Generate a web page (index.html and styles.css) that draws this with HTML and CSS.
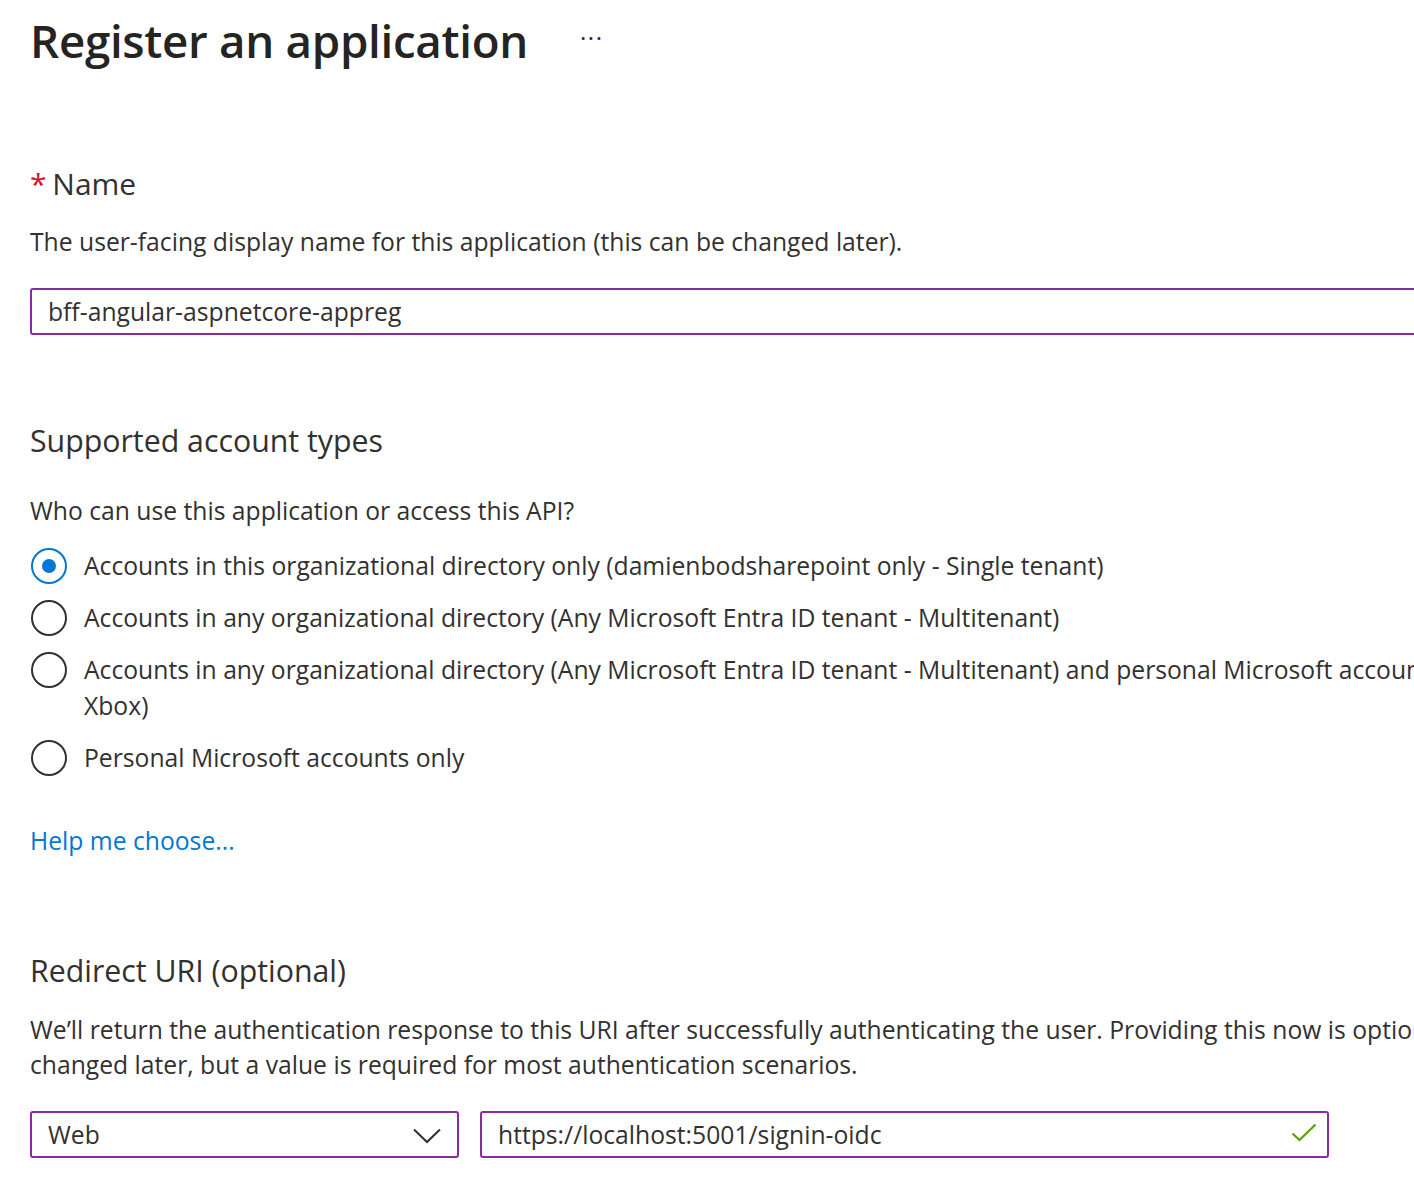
FILE: index.html
```html
<!DOCTYPE html>
<html lang="en">
<head>
<meta charset="utf-8">
<title>Register an application</title>
<link rel="stylesheet" href="styles.css">
</head>
<body>
<main class="page">
  <header class="page-header">
    <h1 class="page-title">Register an application</h1>
    <span class="more" aria-label="More">···</span>
  </header>

  <section class="section section-name">
    <h2 class="label"><span class="req">*</span> Name</h2>
    <p class="desc">The user-facing display name for this application (this can be changed later).</p>
    <div class="textbox textbox-wide">bff-angular-aspnetcore-appreg</div>
  </section>

  <section class="section section-accounts">
    <h2 class="heading">Supported account types</h2>
    <p class="desc question">Who can use this application or access this API?</p>
    <ul class="radios">
      <li class="radio-row"><span class="radio checked"></span><span class="radio-text">Accounts in this organizational directory only (damienbodsharepoint only - Single tenant)</span></li>
      <li class="radio-row"><span class="radio"></span><span class="radio-text">Accounts in any organizational directory (Any Microsoft Entra ID tenant - Multitenant)</span></li>
      <li class="radio-row"><span class="radio"></span><span class="radio-text">Accounts in any organizational directory (Any Microsoft Entra ID tenant - Multitenant) and personal Microsoft accounts (e.g. Skype,<br>Xbox)</span></li>
      <li class="radio-row"><span class="radio"></span><span class="radio-text">Personal Microsoft accounts only</span></li>
    </ul>
    <a class="link" href="#">Help me choose...</a>
  </section>

  <section class="section section-redirect">
    <h2 class="heading">Redirect URI (optional)</h2>
    <p class="desc para">We’ll return the authentication response to this URI after successfully authenticating the user. Providing this now is optional and it can be<br>changed later, but a value is required for most authentication scenarios.</p>
    <div class="uri-row">
      <div class="textbox select">
        <span>Web</span>
        <svg class="chev" width="28" height="16" viewBox="0 0 28 16"><path d="M1 1.5 L14 14 L27 1.5" fill="none" stroke="#323130" stroke-width="2"/></svg>
      </div>
      <div class="textbox uri">
        <span>https://localhost:5001/signin-oidc</span>
        <svg class="check" width="26" height="20" viewBox="0 0 26 20"><path d="M1.5 10.5 L8.5 17 L24.5 1.5" fill="none" stroke="#57a300" stroke-width="2.2"/></svg>
      </div>
    </div>
  </section>
</main>
</body>
</html>
```

FILE: styles.css
```css
html, body {
  margin: 0;
  padding: 0;
  background: #ffffff;
  overflow: hidden;
}

body {
  font-family: "Open Sans", "Noto Sans", sans-serif;
  color: #323130;
}

.page {
  width: 1900px;
  padding-left: 30px;
}

.page-header {
  display: flex;
  align-items: center;
  height: 80px;
}

.page-title {
  margin: 0;
  font-size: 45.7px;
  font-weight: 600;
  letter-spacing: -0.3px;
  color: #252423;
}

.more {
  margin-left: 52px;
  font-size: 24px;
  letter-spacing: 1.5px;
  color: #323130;
  margin-top: -6px;
}

.section { margin: 0; }

.label {
  margin: 84px 0 0;
  font-size: 30px;
  font-weight: 400;
  line-height: 40px;
}

.req {
  color: #e00b1c;
  margin-right: -2px;
}

.desc {
  margin: 0;
  font-size: 24.7px;
  line-height: 34px;
}

.section-name .desc { margin-top: 21px; }

.textbox {
  box-sizing: border-box;
  height: 47px;
  border: 2px solid #8a2ba3;
  border-radius: 3px;
  display: flex;
  align-items: center;
  padding: 0 16px;
  font-size: 24.7px;
}

.textbox-wide {
  width: 1500px;
  margin-top: 29px;
}

.heading {
  margin: 86px 0 0;
  font-size: 30.3px;
  font-weight: 400;
  line-height: 40px;
}

.question { margin-top: 33px; }

.radios {
  list-style: none;
  margin: 20px 0 0;
  padding: 0;
  display: flex;
  flex-direction: column;
  gap: 16px;
}

.radio-row {
  display: flex;
  align-items: flex-start;
  font-size: 24.7px;
  line-height: 36px;
}

.radio {
  flex: none;
  box-sizing: border-box;
  width: 36px;
  height: 36px;
  border: 2px solid #323130;
  border-radius: 50%;
  margin-left: 1px;
  margin-right: 17px;
  position: relative;
}

.radio.checked {
  border-color: #0078d4;
}

.radio.checked::after {
  content: "";
  position: absolute;
  left: 9px;
  top: 9px;
  width: 14px;
  height: 14px;
  border-radius: 50%;
  background: #0078d4;
}

.radio-text { white-space: nowrap; }

.link {
  display: inline-block;
  margin-top: 48px;
  font-size: 24.7px;
  line-height: 34px;
  color: #0078d4;
  text-decoration: none;
}

.section-redirect .heading { margin-top: 93px; }

.para {
  margin-top: 21px;
  line-height: 35px;
  white-space: nowrap;
}

.uri-row {
  display: flex;
  gap: 21px;
  margin-top: 29px;
}

.select {
  width: 429px;
  justify-content: space-between;
  padding-right: 16px;
}

.uri {
  width: 849px;
  justify-content: space-between;
  padding-right: 10px;
}

.chev { display: block; margin-top: 2px; }
.check { display: block; margin-top: -4px; }
```
